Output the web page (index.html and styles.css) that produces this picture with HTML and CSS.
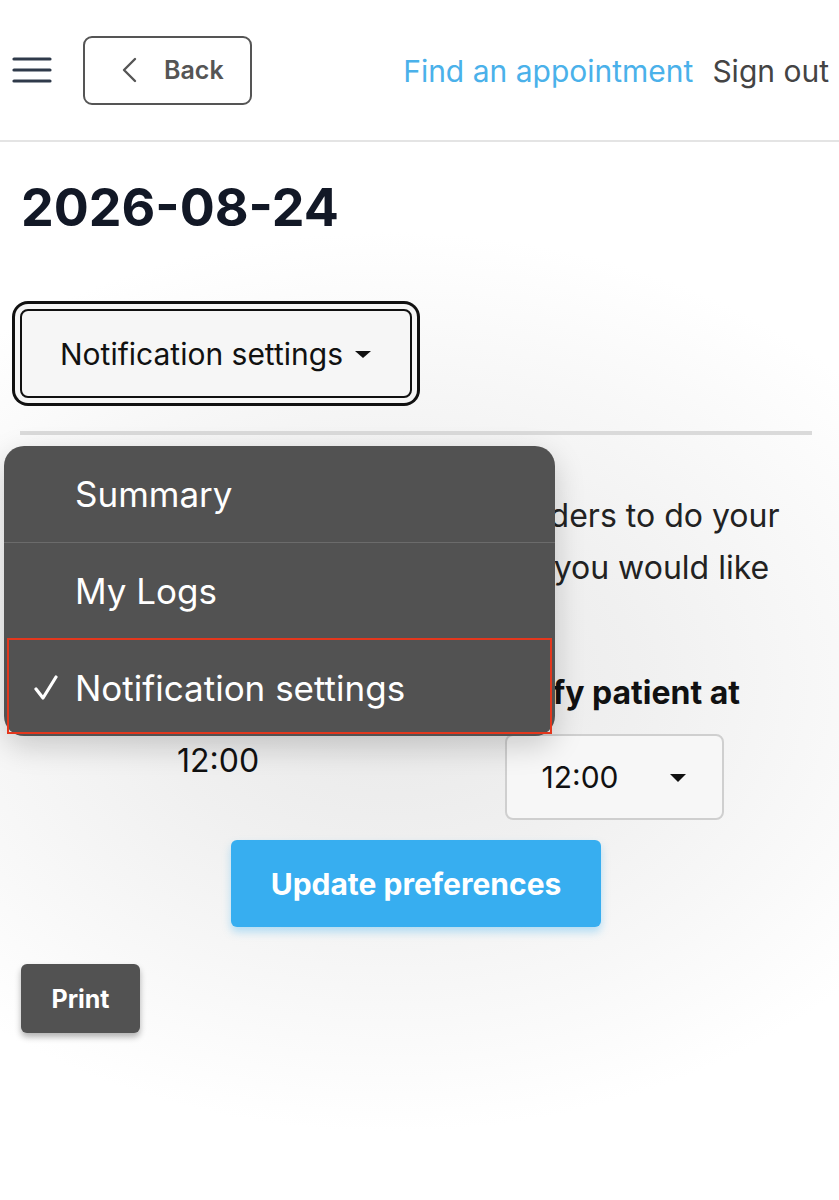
FILE: index.html
```html
<!DOCTYPE html>
<html lang="en">
<head>
    <meta charset="UTF-8">
    <meta name="viewport" content="width=device-width, initial-scale=1.0">
    <title>Notification settings</title>
    <link rel="stylesheet" href="styles.css">
</head>
<body>
    <header class="topbar">
        <button class="menu-toggle" aria-label="Menu">
            <svg width="40" height="26" viewBox="0 0 40 26">
                <g stroke="#2f3a4a" stroke-width="3.2" stroke-linecap="round">
                    <line x1="2" y1="2" x2="38" y2="2"/>
                    <line x1="2" y1="13" x2="38" y2="13"/>
                    <line x1="2" y1="24" x2="38" y2="24"/>
                </g>
            </svg>
        </button>
        <button class="back-btn">
            <svg width="16" height="26" viewBox="0 0 16 26">
                <polyline points="14,2 3,13 14,24" fill="none" stroke="#555" stroke-width="2.4" stroke-linecap="round" stroke-linejoin="round"/>
            </svg>
            <span>Back</span>
        </button>
        <nav class="nav">
            <a href="#" class="nav-link primary">Find an appointment</a>
            <a href="#" class="nav-link">Sign out</a>
        </nav>
    </header>

    <main class="page">
        <h1 class="date">2026-08-24</h1>

        <div class="tab-select">
            <button class="tab-btn">Notification settings <span class="caret"></span></button>

            <ul class="tab-menu">
                <li class="tab-item">Summary</li>
                <li class="tab-item">My Logs</li>
                <li class="tab-item selected">
                    <svg class="check" width="26" height="26" viewBox="0 0 26 26">
                        <polyline points="3,14 10,23 23,2" fill="none" stroke="#fff" stroke-width="3.2" stroke-linecap="round" stroke-linejoin="round"/>
                    </svg>
                    Notification settings
                </li>
            </ul>
        </div>

        <hr class="divider">

        <p class="intro">You can set up text message reminders to do your logs. Choose the time of day when you would like reminders to be sent.</p>

        <div class="prefs">
            <div class="pref-col">
                <div class="pref-label">Last notified at</div>
                <div class="pref-value">12:00</div>
            </div>
            <div class="pref-col">
                <div class="pref-label">Notify patient at</div>
                <div class="time-select">
                    <span>12:00</span>
                    <span class="caret small"></span>
                </div>
            </div>
        </div>

        <div class="actions">
            <button class="update-btn">Update preferences</button>
        </div>

        <button class="print-btn">Print</button>
    </main>
</body>
</html>
```

FILE: styles.css
```css
body {
    margin: 0;
    font-family: Inter, "Noto Sans", sans-serif;
    color: #1a1a1a;
    background: #fff;
}
button {
    font-family: inherit;
}
.topbar {
    height: 140px;
    display: flex;
    align-items: center;
    padding: 0 10px 0 12px;
    background: #fff;
    border-bottom: 2px solid #e4e4e4;
}
.menu-toggle {
    border: none;
    background: none;
    padding: 0;
    display: flex;
}
.back-btn {
    margin-left: 31px;
    width: 169px;
    height: 69px;
    border: 2px solid #555;
    border-radius: 9px;
    background: #fff;
    display: flex;
    align-items: center;
    padding: 0 0 0 36px;
    gap: 27px;
    font-size: 25px;
    font-weight: 600;
    color: #555;
}
.nav {
    margin-left: auto;
    display: flex;
    gap: 19px;
    margin-top: 2px;
}
.nav-link {
    font-size: 30px;
    color: #444;
    text-decoration: none;
}
.nav-link.primary {
    color: #4ab1ea;
}
.page {
    min-height: 1000px;
    padding: 33px 27px 0 20px;
    background: radial-gradient(ellipse 620px 450px at 390px 540px, #e8e8e8 0%, #f0f0f0 40%, #fafafa 80%, #fff 100%);
}
.date {
    margin: 0;
    font-size: 52px;
    line-height: 65px;
    font-weight: 700;
    color: #121826;
    padding-left: 1px;
}
.tab-select {
    position: relative;
    margin-top: 69px;
}
.tab-btn {
    width: 392px;
    height: 89px;
    border: 2px solid #111;
    border-radius: 8px;
    background: #f6f6f6;
    box-shadow: 0 0 0 5px #f6f6f6, 0 0 0 8px #111;
    font-size: 30px;
    color: #111;
    text-align: left;
    padding: 0 0 0 38px;
    display: flex;
    align-items: center;
    gap: 12px;
}
.caret {
    width: 0;
    height: 0;
    border-left: 8px solid transparent;
    border-right: 8px solid transparent;
    border-top: 7px solid #111;
    margin-top: 2px;
}
.caret.small {
    border-top-width: 8px;
}
.tab-menu {
    position: absolute;
    left: -16px;
    top: 137px;
    width: 551px;
    margin: 0;
    padding: 0;
    list-style: none;
    background: #525252;
    border-radius: 20px;
    box-shadow: 0 10px 30px rgba(0, 0, 0, 0.18);
    z-index: 5;
}
.tab-item {
    height: 96px;
    display: flex;
    align-items: center;
    padding-left: 71px;
    font-size: 35px;
    color: #fff;
    position: relative;
}
.tab-item + .tab-item {
    border-top: 1px solid #6b6b6b;
}
.tab-item.selected {
    border-top-color: #525252;
}
.tab-item.selected::after {
    content: '';
    position: absolute;
    left: 3px;
    right: 3px;
    top: -2px;
    bottom: 2px;
    border: 2px solid #e3371d;
}
.check {
    position: absolute;
    left: 29px;
    top: 35px;
}
.divider {
    margin: 33px 0 0;
    border: none;
    height: 4px;
    background: #dadada;
}
.intro {
    margin: 55px 0 0;
    font-size: 32px;
    line-height: 52px;
    color: #222;
}
.prefs {
    display: grid;
    grid-template-columns: 1fr 1fr;
    text-align: center;
    margin-top: 25px;
}
.pref-label {
    font-size: 32px;
    font-weight: 700;
    color: #111;
    line-height: 44px;
}
.pref-value {
    font-size: 32px;
    color: #111;
    margin-top: 26px;
    line-height: 40px;
}
.time-select {
    width: 219px;
    height: 86px;
    box-sizing: border-box;
    margin: 19px auto 0;
    border: 2px solid #cfcfcf;
    border-radius: 8px;
    background: #f7f7f7;
    display: flex;
    align-items: center;
    padding: 0 36px 0 35px;
    justify-content: space-between;
    font-size: 30px;
    color: #111;
}
.actions {
    display: flex;
    justify-content: center;
    margin-top: 20px;
}
.update-btn {
    width: 370px;
    height: 87px;
    border: none;
    border-radius: 6px;
    background: #37aef0;
    color: #fff;
    font-size: 30px;
    font-weight: 700;
    box-shadow: 0 5px 8px rgba(55, 174, 240, 0.35);
}
.print-btn {
    margin: 37px 0 0 1px;
    width: 119px;
    height: 69px;
    border: none;
    border-radius: 6px;
    background: #525252;
    color: #fff;
    font-size: 25px;
    font-weight: 700;
    box-shadow: 0 4px 6px rgba(0, 0, 0, 0.3);
}
```
